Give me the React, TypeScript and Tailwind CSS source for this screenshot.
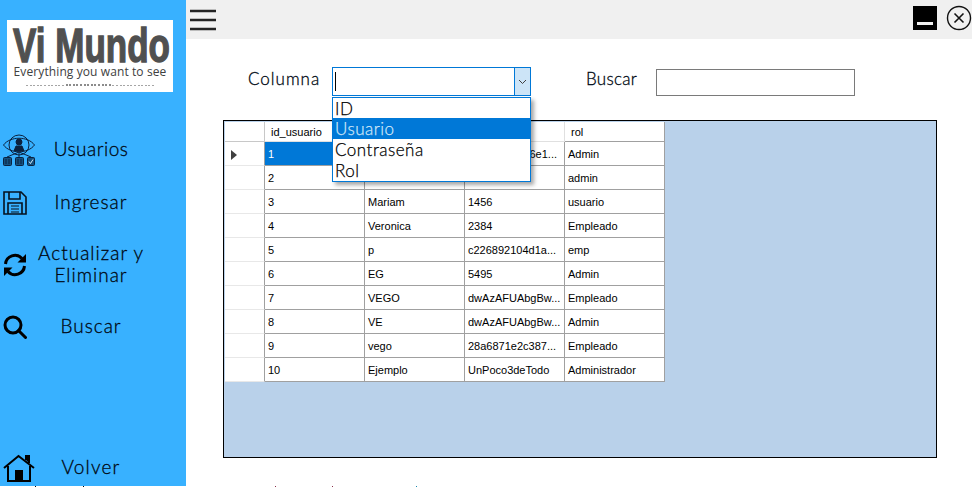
const sans = "font-['Lato','Open_Sans',sans-serif]";

function EyeIcon() {
  return (
    <svg width="32" height="32" viewBox="0 0 32 32" fill="none" stroke="#0b2240" strokeWidth="1">
      <path d="M0.5 11 C7 2 25 2 31.5 11 C25 20 7 20 0.5 11Z" />
      <circle cx="16" cy="11" r="10" />
      <circle cx="16" cy="8" r="3" fill="#0b2240" />
      <path d="M11 17 L13 12 H19 L21 17 Z" fill="#0b2240" />
      <path d="M16 18 V23 M16 18 L4 23 M16 18 L28 23" />
      <rect x="0.5" y="23.5" width="8" height="8" rx="1" fill="#14517f" />
      <rect x="12.5" y="23.5" width="8" height="8" rx="1" fill="#14517f" />
      <rect x="24.5" y="23.5" width="7" height="8" rx="1" fill="#14517f" />
      <path d="M3 25 V30 M6 25 V30 M15 25 V30 M18 25 V30" stroke="#0b2240" />
      <path d="M26 27.5 L27.5 29.5 L30 25.5" stroke="#d7ecfb" />
    </svg>
  );
}

function SaveIcon() {
  return (
    <svg width="24" height="24" viewBox="0 0 24 24" fill="none" stroke="#06121f" strokeWidth="1.6">
      <path d="M1 1 H18 L23 6 V23 H1 Z" />
      <path d="M6 1 V8 H17 V1" />
      <path d="M5 23 V12 H19 V23" />
      <path d="M8 15 H16 M8 18 H16 M8 21 H16" strokeWidth="1.2" />
    </svg>
  );
}

function RefreshIcon() {
  return (
    <svg width="24" height="24" viewBox="0 0 24 24" fill="none" stroke="#000" strokeWidth="3">
      <path d="M2.5 11 A9.5 9.5 0 0 1 19 5.5" />
      <path d="M21.5 13 A9.5 9.5 0 0 1 5 18.5" />
      <path d="M23 1 V9.5 H14.5 Z" fill="#000" strokeWidth="0" />
      <path d="M1 23 V14.5 H9.5 Z" fill="#000" strokeWidth="0" />
    </svg>
  );
}

function SearchIcon() {
  return (
    <svg width="24" height="24" viewBox="0 0 24 24" fill="none" stroke="#000" strokeWidth="3">
      <circle cx="10" cy="10" r="8" />
      <path d="M15.5 15.5 L22.5 22.5" strokeLinecap="round" />
    </svg>
  );
}

function HomeIcon() {
  return (
    <svg width="32" height="28" viewBox="0 0 32 28" fill="none" stroke="#000" strokeWidth="2">
      <path d="M1 14 L15.5 2 L31 14" />
      <path d="M26 9 V2 H23 V6" fill="#000" />
      <path d="M5 12 V27 H27 V12" />
      <rect x="12" y="16" width="8" height="11" fill="#000" stroke="none" />
    </svg>
  );
}

function NavItem({ icon, label, className, labelClass }: { icon: React.ReactNode; label: React.ReactNode; className: string; labelClass: string }) {
  return (
    <div className={`flex items-center ${className}`}>
      <div className="flex w-[36px] shrink-0 justify-start pl-[3px]">{icon}</div>
      <div className={`mb-[2px] w-[110px] text-center text-[19px] font-light leading-[22px] text-black [-webkit-text-stroke:0.3px_#000f24] ${labelClass}`}>{label}</div>
    </div>
  );
}

const rows = [
  ["1", "", "", "Admin"],
  ["2", "", "", "admin"],
  ["3", "Mariam", "1456", "usuario"],
  ["4", "Veronica", "2384", "Empleado"],
  ["5", "p", "c226892104d1a...", "emp"],
  ["6", "EG", "5495", "Admin"],
  ["7", "VEGO", "dwAzAFUAbgBw...", "Empleado"],
  ["8", "VE", "dwAzAFUAbgBw...", "Admin"],
  ["9", "vego", "28a6871e2c387...", "Empleado"],
  ["10", "Ejemplo", "UnPoco3deTodo", "Administrador"],
];

const dots = Array.from({ length: 36 }, (_, i) => i);

function Grid() {
  return (
    <div className="mx-[37px] mt-[29px] h-[338px] w-[714px] border border-black bg-[#b9d1ea] pl-px pt-px font-['Liberation_Sans',sans-serif] text-[11px] text-black">
      <div className="grid w-[440px] grid-cols-[40px_100px_100px_100px_100px] bg-white">
        <div className="h-[20px] border-r border-b border-[#c8c8c8]" />
        <div className="flex h-[20px] items-center border-r border-b border-[#e0e0e0] pl-[6px] pt-[2px]">id_usuario</div>
        <div className="flex h-[20px] items-center border-r border-b border-[#e0e0e0] pl-[6px] pt-[2px]">usuario</div>
        <div className="flex h-[20px] items-center border-r border-b border-[#e0e0e0] pl-[6px] pt-[2px]">contraseña</div>
        <div className="flex h-[20px] items-center border-r border-b border-[#a0a0a0] pl-[6px] pt-[2px]">rol</div>
        {rows.map((r, i) => (
          <div key={r[0]} className="contents">
            <div className="flex h-[24px] items-center border-r border-b border-[#a0a0a0] border-b-[#e8e8e8] pl-[6px]">
              {i === 0 && (
                <svg width="6" height="10" viewBox="0 0 6 10" className="mt-[2px]">
                  <path d="M0 0 L6 5 L0 10Z" fill="#404040" />
                </svg>
              )}
            </div>
            <div className={`flex h-[24px] items-center border-r border-b border-[#a0a0a0] pl-[3px] pt-[1px] ${i === 0 ? "bg-[#0078d7] text-white" : ""}`}>{r[0]}</div>
            <div className="flex h-[24px] items-center border-r border-b border-[#a0a0a0] pl-[3px] pt-[1px]">{r[1]}</div>
            <div className="flex h-[24px] items-center justify-start overflow-hidden whitespace-nowrap border-r border-b border-[#a0a0a0] pl-[3px] pt-[1px]">
              {i === 0 ? <span className="ml-auto pr-[7px]">6e1...</span> : r[2]}
            </div>
            <div className="flex h-[24px] items-center border-r border-b border-[#a0a0a0] pl-[3px] pt-[1px]">{r[3]}</div>
          </div>
        ))}
      </div>
    </div>
  );
}

export default function App() {
  return (
    <div className={`relative flex h-[487px] w-[972px] overflow-hidden bg-white ${sans}`}>
      <aside className="flex h-[486px] w-[186px] shrink-0 flex-col bg-[#38b1ff]">
        <div className="mx-[7px] mt-[20px] flex h-[72px] w-[166px] flex-col items-center overflow-hidden bg-white text-[#505050]">
          <div className="ml-[3px] mt-[6px] h-[39px] origin-top scale-y-[1.4] whitespace-nowrap font-['Liberation_Sans',sans-serif] text-[35px] font-bold leading-[27px] [-webkit-text-stroke:1px_#505050]">
            Vi Mundo
          </div>
          <div className="whitespace-nowrap font-['Open_Sans',sans-serif] text-[12px] leading-[14px] tracking-[0.1px] text-[#404040]">Everything you want to see</div>
          <div className="mt-[5px] flex items-center gap-[1.6px]">
            {dots.map((d) => (
              <div key={d} className={d > 10 && d < 24 ? "h-[2px] w-[2px] rounded-full bg-[#666]" : "h-px w-[2px] rounded-full bg-[#999]"} />
            ))}
          </div>
        </div>
        <NavItem className="mt-[42px]" labelClass="tracking-[0.5px]" icon={<EyeIcon />} label="Usuarios" />
        <NavItem className="mt-[25px]" labelClass="tracking-[1px]" icon={<SaveIcon />} label="Ingresar" />
        <NavItem className="mt-[27px]" labelClass="tracking-[1px]" icon={<RefreshIcon />} label={<>Actualizar y<br />Eliminar</>} />
        <NavItem className="mt-[27px]" labelClass="tracking-[1px]" icon={<SearchIcon />} label="Buscar" />
        <NavItem className="mt-auto mb-[4px]" labelClass="tracking-[1.2px]" icon={<HomeIcon />} label="Volver" />
      </aside>

      <main className="relative flex-1">
        <header className="flex h-[39px] items-start bg-[#f0f0f0] pl-[4px] pr-[2px] pt-[6px]">
          <svg width="26" height="22" viewBox="0 0 26 22" stroke="#222" strokeWidth="2.6" className="mt-[3px]">
            <path d="M0 2 H26 M0 11 H26 M0 20 H26" />
          </svg>
          <div className="ml-auto flex h-[24px] w-[24px] items-end justify-center bg-black pb-[5px]">
            <div className="h-[3px] w-[16px] bg-[#f0f0f0]" />
          </div>
          <svg width="26" height="26" viewBox="0 0 26 26" fill="none" stroke="#111" className="ml-[9px] -mt-px">
            <circle cx="13" cy="13" r="11.5" strokeWidth="1.4" />
            <path d="M8.5 8.5 L17.5 17.5 M17.5 8.5 L8.5 17.5" strokeWidth="1.6" />
          </svg>
        </header>

        <div className="flex h-[52px] pl-[62px] pt-[28px] text-[17px] font-light text-black [-webkit-text-stroke:0.3px_#000f24]">
          <span className="w-[84px] leading-[24px] tracking-[1px]">Columna</span>
          <div className="flex h-[29px] w-[199px] items-stretch border border-[#0078d7] bg-white">
            <div className="flex flex-1 items-center pl-[2px]"><div className="h-[19px] w-px bg-black" /></div>
            <div className="flex w-[16px] items-center justify-center border-l border-[#0078d7] bg-[#cce4f7]">
              <svg width="9" height="6" viewBox="0 0 9 6" fill="none" stroke="#404040"><path d="M1 1 L4.5 4.5 L8 1" /></svg>
            </div>
          </div>
          <span className="ml-[55px] w-[70px] leading-[24px] tracking-[0.3px]">Buscar</span>
          <div className="mt-[2px] h-[27px] w-[199px] border border-[#7a7a7a] bg-white" />
        </div>

        <Grid />

        <div className="absolute left-[146px] top-[97px] w-[199px] border border-[#0078d7] bg-white text-[17px] font-light leading-[21px] tracking-[0.5px] text-black [-webkit-text-stroke:0.25px_currentColor] shadow-[3px_3px_4px_rgba(0,0,0,0.35)]">
          <div className="h-[20px] pl-[2px]">ID</div>
          <div className="h-[21px] bg-[#0078d7] pl-[2px] text-[#cfe6f7]">Usuario</div>
          <div className="h-[21px] pl-[2px]">Contraseña</div>
          <div className="h-[21px] pl-[2px]">Rol</div>
        </div>
      </main>

      <div className="absolute left-[35px] top-[486px] h-px w-px bg-black" />
      <div className="absolute left-[83px] top-[486px] h-px w-px bg-black" />
      <div className="absolute left-[275px] top-[486px] h-px w-px bg-[#8a2f4a]" />
      <div className="absolute left-[332px] top-[486px] h-px w-px bg-[#8a2f4a]" />
      <div className="absolute left-[416px] top-[486px] h-px w-px bg-[#1a8ab0]" />
    </div>
  );
}
